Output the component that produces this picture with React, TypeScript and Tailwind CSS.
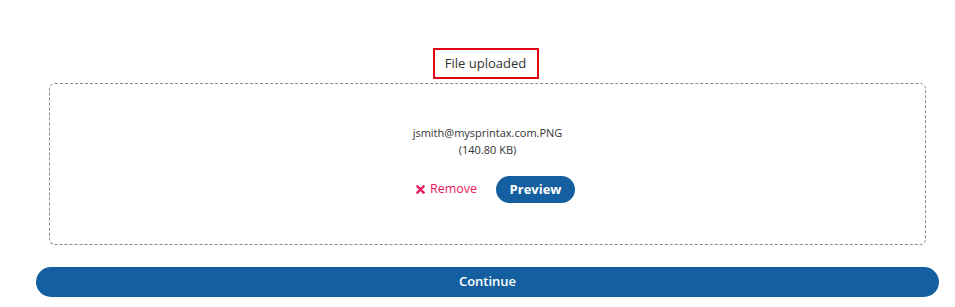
export default function App() {
  return (
    <div
      className="w-[955px] h-[307px] bg-white pl-[36px] pr-[16px] pt-[48px] text-[#333]"
      style={{ fontFamily: "'Open Sans', 'Liberation Sans', sans-serif" }}
    >
      <div className="flex justify-center">
        <div className="border-2 border-[#e30613] w-[106px] h-[31px] flex items-center justify-center text-[13px] text-[#333] ml-[-4px]">
          File uploaded
        </div>
      </div>
      <div className="mx-[13px] mt-[4px] h-[162px] border border-dashed border-[#888] rounded-[6px] flex flex-col items-center pt-[40px]">
        <div className="text-[11px] leading-[17px] text-[#333]">jsmith@mysprintax.com.PNG</div>
        <div className="text-[11px] leading-[17px] text-[#333]">(140.80 KB)</div>
        <div className="flex items-center gap-[19px] mt-[18px] ml-[16px]">
          <button className="flex items-center gap-[5px] text-[12.5px] text-[#e8195a]">
            <svg width="9" height="9" viewBox="0 0 10 10">
              <path d="M1.5 1.5 L8.5 8.5 M8.5 1.5 L1.5 8.5" stroke="#e8195a" strokeWidth="2.6" strokeLinecap="round" />
            </svg>
            Remove
          </button>
          <button className="w-[79px] h-[27px] rounded-full bg-[#135f9f] text-white text-[13px] font-bold">
            Preview
          </button>
        </div>
      </div>
      <button className="mt-[22px] w-full h-[30px] rounded-full bg-[#135f9f] text-white text-[13px] font-semibold">
        Continue
      </button>
    </div>
  );
}
